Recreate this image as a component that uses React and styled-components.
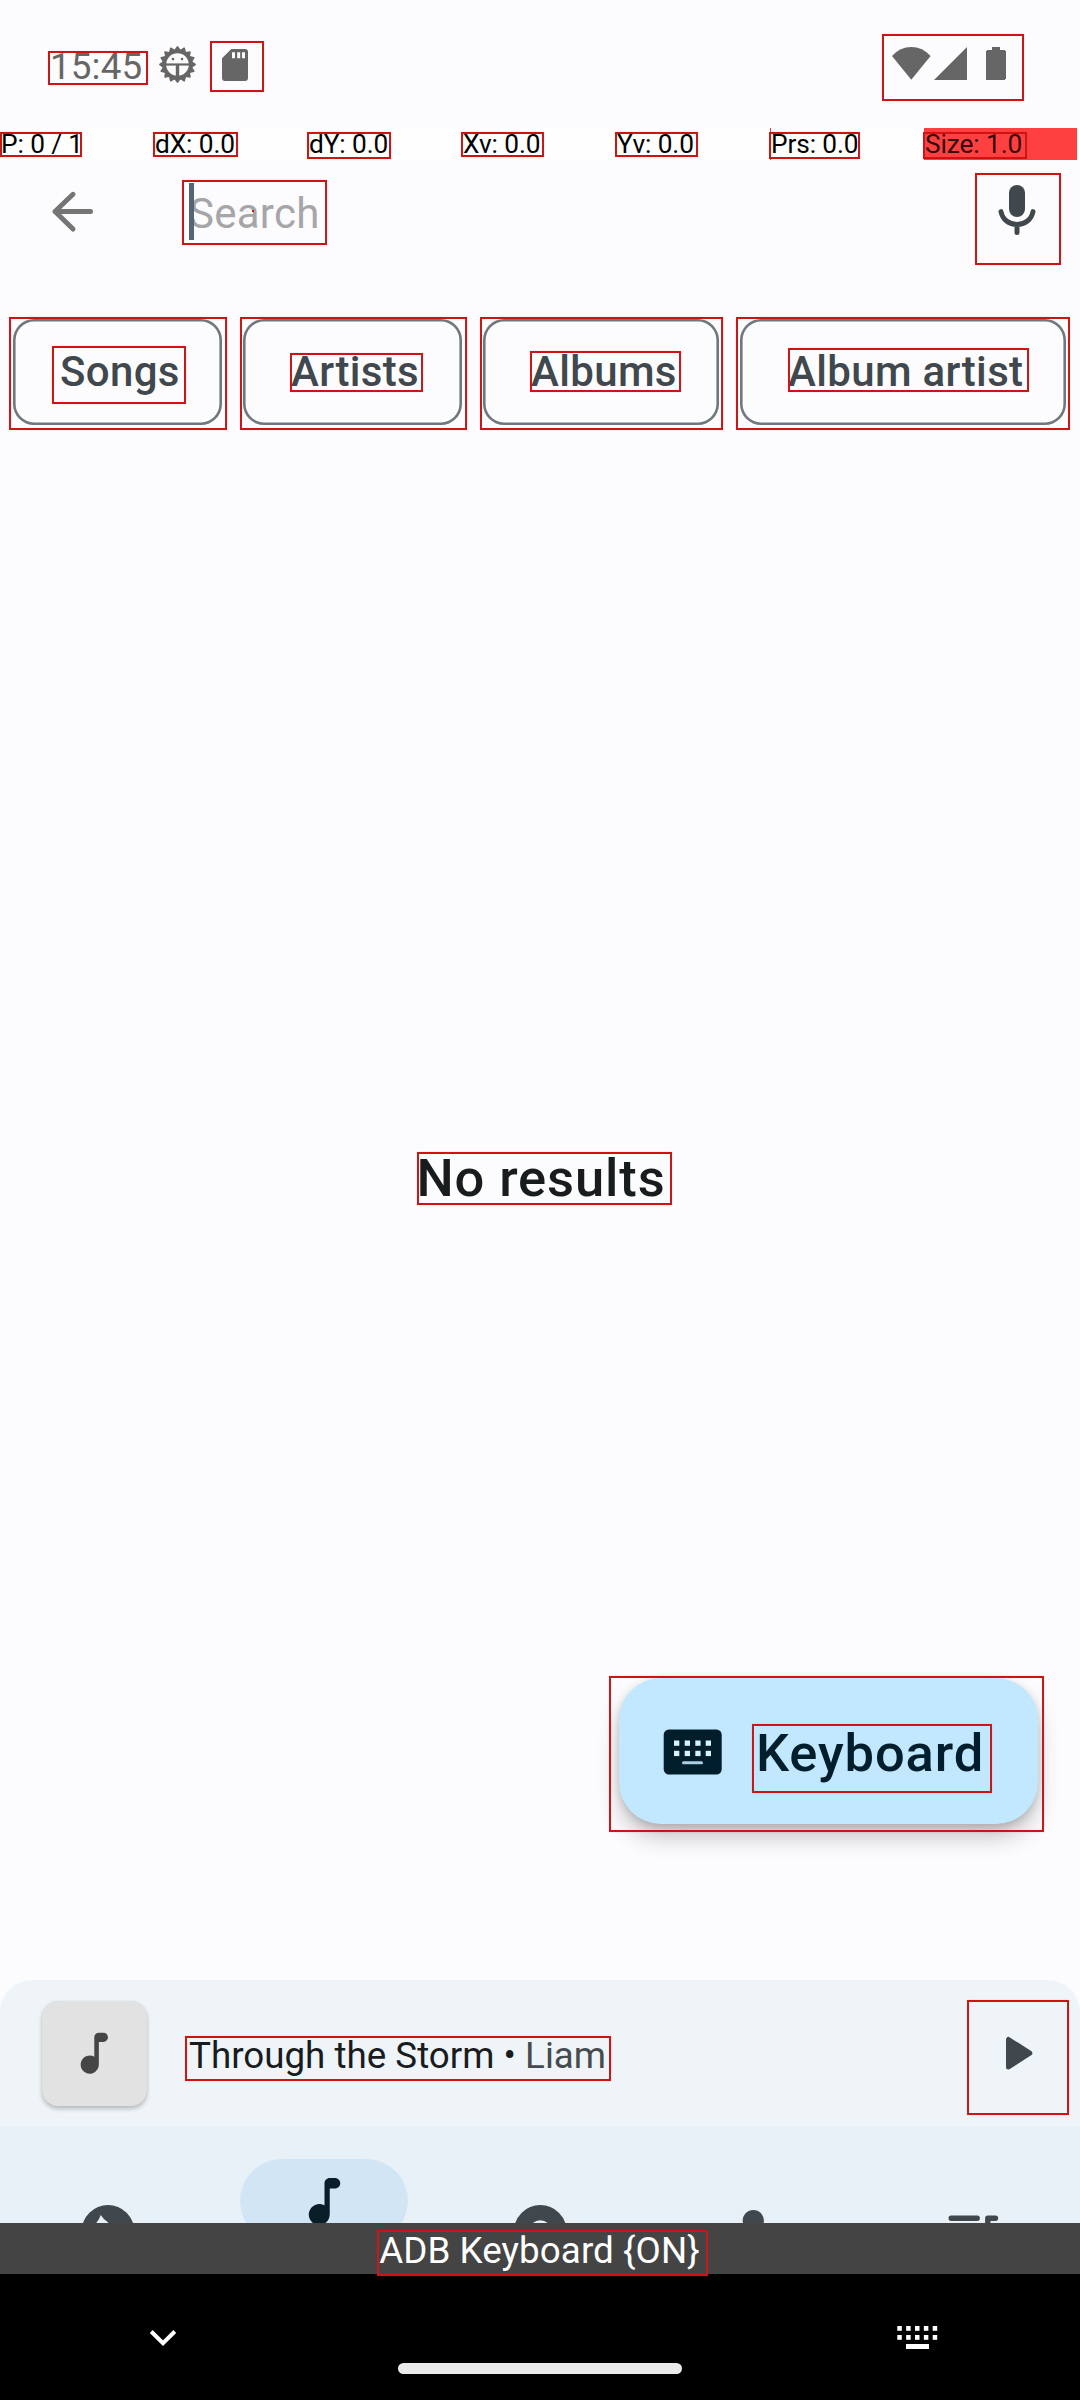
import React from "react";
import styled, { createGlobalStyle, css } from "styled-components";

const GlobalStyle = createGlobalStyle`
  *, *::before, *::after { box-sizing: border-box; }
  body { margin: 0; background: #fcfcff; font-family: Roboto, "Noto Sans", sans-serif; }
  svg { display: block; flex: none; }
`;

const Screen = styled.main`
  position: relative;
  display: flex;
  flex-direction: column;
  width: 1080px;
  height: 2400px;
  overflow: hidden;
  background: #fcfcff;
  white-space: nowrap;
`;

/* Status bar */
const StatusBar = styled.header`
  display: flex;
  align-items: flex-start;
  height: 128px;
  flex: none;
  padding: 45px 74px 0 50px;
  color: #666666;
`;

const Clock = styled.time`
  width: 108px;
  font-size: 36.75px;
  line-height: 43px;
  letter-spacing: 0.15px;
`;

const StatusIcons = styled.div`
  display: flex;
  gap: 24px;
`;

const SystemIcons = styled(StatusIcons)`
  margin-left: auto;
  gap: 3px;
`;

/* Touch pointer readout */
const PointerBar = styled.div`
  display: grid;
  grid-template-columns: repeat(7, 154px);
  height: 32px;
  flex: none;
  background: #fefefe;
`;

const PointerCell = styled.span`
  width: 153px;
  padding-left: 1px;
  font-size: 26.25px;
  line-height: 32px;
  letter-spacing: -0.1px;
  color: #000;
  ${({ $tick }) => $tick && css`box-shadow: inset 1px 0 #b85050;`}
  ${({ $hot }) => $hot && css`background: #ff4040; color: #330808;`}
`;

/* Search */
const SearchBar = styled.div`
  display: flex;
  align-items: center;
  height: 103px;
  flex: none;
  padding: 0 42px 0 41px;
`;

const SearchField = styled.div`
  position: relative;
  flex: 1;
  margin-left: 85px;
  padding-top: 4px;
  font-size: 42px;
  line-height: 60px;
  letter-spacing: 0.25px;
  color: #a6a6a8;
`;

const Cursor = styled.i`
  position: absolute;
  left: 0;
  top: 3px;
  width: 5px;
  height: 57px;
  background: #50616c;
  opacity: 0.97;
`;

const VoiceButton = styled.div`
  padding-bottom: 5px;
`;

/* Filter chips */
const ChipRow = styled.nav`
  display: flex;
  gap: 21px;
  flex: none;
  padding: 56px 14px 0 13px;
`;

const Chip = styled.button`
  width: ${({ $width }) => $width}px;
  height: 106px;
  padding: 0 0 0 ${({ $inset }) => $inset}px;
  border: 0;
  border-radius: 21px;
  box-shadow: inset 0 0 0 2.6px #70787d;
  background: transparent;
  font: 500 42px/106px Roboto, sans-serif;
  letter-spacing: 0.34px;
  text-align: left;
  color: #41484d;
`;

/* Results */
const Results = styled.section`
  display: flex;
  flex: 1;
  align-items: center;
  justify-content: center;
  padding: 0 0 49px 2px;
`;

const EmptyTitle = styled.h1`
  margin: 0;
  font-size: 52.5px;
  line-height: 64px;
  font-weight: 500;
  letter-spacing: 0.88px;
  color: #191c1e;
`;

const Fab = styled.button`
  position: absolute;
  right: 42px;
  bottom: 576px;
  display: flex;
  align-items: center;
  width: 419px;
  height: 146px;
  padding: 0 0 0 44px;
  border: 0;
  border-radius: 42px;
  background: #c2e8ff;
  box-shadow: 0 14px 24px -2px rgba(0, 0, 0, 0.24), 0 3px 9px rgba(0, 0, 0, 0.14);
  color: #001e2b;
`;

const FabIcon = styled.span`
  padding-top: 2px;
`;

const FabLabel = styled.span`
  margin-left: 34px;
  padding-top: 4px;
  font: 500 52.5px/64px Roboto, sans-serif;
  letter-spacing: 0.86px;
`;

/* Mini player */
const MiniPlayer = styled.section`
  display: flex;
  align-items: center;
  height: 147px;
  flex: none;
  padding: 0 36px 0 42px;
  border-radius: 32px 32px 0 0;
  background: #eff4f8;
`;

const Artwork = styled.div`
  display: grid;
  place-items: center;
  width: 105px;
  height: 105px;
  border-radius: 16px;
  background: #e2e2e2;
  box-shadow: 0 3px 4px rgba(0, 0, 0, 0.22), 0 0 2px rgba(0, 0, 0, 0.08);
  color: #454545;
`;

const Track = styled.p`
  flex: 1;
  margin: 0 0 0 42px;
  padding-top: 4px;
  font-size: 36.75px;
  line-height: 44px;
  color: #191c1e;
`;

const Artist = styled.span`
  color: #464b4f;
`;

/* Bottom navigation */
const BottomNav = styled.nav`
  display: grid;
  grid-template-columns: repeat(5, 1fr);
  height: 96px;
  flex: none;
  overflow: hidden;
  background: #e9f1f8;
`;

const NavItem = styled.div`
  display: flex;
  flex-direction: column;
  align-items: center;
  padding-top: ${({ $active }) => ($active ? 32 : 73)}px;
  color: #41484d;
`;

const Pill = styled.div`
  display: grid;
  place-items: center;
  width: 168px;
  height: 84px;
  flex: none;
  border-radius: 42px;
  background: #d2e5f4;
  color: #0a1e2a;
`;

/* Input method and system navigation */
const ImeBar = styled.div`
  height: 51px;
  flex: none;
  padding: 4px 1px 0 0;
  background: #444444;
  font-size: 36.75px;
  line-height: 47px;
  letter-spacing: 0.08px;
  text-align: center;
  color: #fff;
`;

const SystemNav = styled.footer`
  display: flex;
  align-items: flex-start;
  height: 126px;
  flex: none;
  padding: 52px 142px 0 149px;
  background: #000;
`;

const HomeHandle = styled.div`
  width: 284px;
  height: 11px;
  margin: 37px auto 0 221px;
  border-radius: 5.5px;
  background: #ebebeb;
`;

/* Element bounds drawn over the interface */
const Bounds = styled.i`
  position: absolute;
  left: ${({ $box }) => $box[0]}px;
  top: ${({ $box }) => $box[1]}px;
  width: ${({ $box }) => $box[2] - $box[0]}px;
  height: ${({ $box }) => $box[3] - $box[1]}px;
  border: 2px solid;
  border-color: #d01212 #c41a1c #d01212 #c41a1c;
  box-shadow: 0 0 2px rgba(220, 0, 0, 0.14);
  pointer-events: none;
`;

const TouchDot = styled.i`
  position: absolute;
  left: 252px;
  top: 210px;
  width: 2px;
  height: 2px;
  background: #d01212;
`;

const BugIcon = () => (
  <svg width="39" height="39" viewBox="-19.5 -19.5 39 39" fill="none" stroke="currentColor">
    <circle r="13.2" strokeWidth="3.8" />
    {Array.from({ length: 16 }, (_, i) => (
      <path key={i} d="M-2.4 -14.2L0 -17.6L2.4 -14.2Z" fill="currentColor" strokeWidth="1.6" strokeLinejoin="round" transform={`rotate(${i * 22.5})`} />
    ))}
    <path d="M-12 0H12" strokeWidth="2.2" />
    <path d="M0 0V12" strokeWidth="3.4" />
    <circle cx="-4.5" cy="-5.4" r="1.3" fill="currentColor" stroke="none" />
    <circle cx="4.5" cy="-5.4" r="1.3" fill="currentColor" stroke="none" />
  </svg>
);

const SdIcon = () => (
  <svg width="32" height="40" viewBox="0 0 32 40" fill="currentColor">
    <path fillRule="evenodd" d="M10.3 4H24q3 0 3 3V33q0 3-3 3H4q-3 0-3-3V13.3Z M11 7.2V13.2H14V7.2Z M16.2 7.2V13.2H19.2V7.2Z M21 7.2V13.2H24V7.2Z" />
  </svg>
);

const WifiIcon = () => (
  <svg width="39" height="36" viewBox="0 0 39 36" fill="currentColor">
    <path d="M0 11Q8 2 19.3 2T38.6 11L19.3 34.7Z" />
  </svg>
);

const SignalIcon = () => (
  <svg width="33" height="36" viewBox="0 0 33 36" fill="currentColor">
    <path d="M0 35L33 2V35Z" />
  </svg>
);

const BatteryIcon = () => (
  <svg width="36" height="36" viewBox="0 0 36 36" fill="currentColor">
    <path d="M30 2V5H35V6H36V34H35V35H16V6H17V5H22V2Z" />
  </svg>
);

const BackIcon = () => (
  <svg width="63" height="63" viewBox="0 0 63 63" fill="none" stroke="#757575" strokeWidth="5" strokeLinecap="round" strokeLinejoin="round">
    <path d="M49.5 31.5H14M32 14.3L14 31.5L32 49" />
  </svg>
);

const MicIcon = () => (
  <svg width="42" height="54" viewBox="0 0 42 54" fill="none" stroke="#41484d" strokeWidth="5" strokeLinecap="round">
    <rect x="13" y="3" width="16" height="32" rx="8" fill="#41484d" stroke="none" />
    <path d="M5 29.6C6.5 37.5 13 42.5 21 42.5S35.5 37.5 37 29.6M21 43V50.5" />
  </svg>
);

const KeyboardIcon = () => (
  <svg width="59" height="46" viewBox="0 0 59 46">
    <rect x="0.7" y="0.5" width="58" height="45" rx="5.2" fill="currentColor" />
    <g fill="#d9f0ff">
      {[11, 21.7, 32.3, 42.7].flatMap((x) => [11.5, 21.8].map((y) => <rect key={`${x}-${y}`} x={x} y={y} width="5.3" height="5.3" />))}
    </g>
    <rect x="19" y="32.3" width="21" height="3" rx="1.5" fill="#a9cfe5" />
  </svg>
);

const NoteIcon = ({ size }) => (
  <svg width={size} height={size} viewBox="0 0 24 24" fill="currentColor">
    <path d="M12 5v8.55c-.94-.54-2.1-.75-3.33-.32-1.34.48-2.37 1.67-2.61 3.07-.46 2.74 1.86 5.08 4.59 4.65 1.96-.31 3.35-2.11 3.35-4.1V7h2c1.1 0 2-.9 2-2s-.9-2-2-2h-2c-1.1 0-2 .9-2 2z" />
  </svg>
);

const PlayIcon = () => (
  <svg width="50" height="63" viewBox="0 0 50 63">
    <path d="M14.5 17.5V45L35.8 31.2Z" fill="#41484d" stroke="#41484d" strokeWidth="5" strokeLinejoin="round" />
  </svg>
);

const HomeIcon = () => (
  <svg width="63" height="63" viewBox="0 0 63 63" fill="currentColor">
    <circle cx="31" cy="31.3" r="26.3" />
    <path d="M23.7 15Q26.5 19.8 34 24.5L28 40L17.5 25Q22 20.5 23.7 15Z" fill="#e9f1f8" />
  </svg>
);

const DiscIcon = () => (
  <svg width="63" height="63" viewBox="0 0 63 63" fill="none" stroke="currentColor">
    <circle cx="31.3" cy="31.3" r="18.7" strokeWidth="15.2" />
    <circle cx="31.3" cy="31.3" r="3" fill="currentColor" />
  </svg>
);

const PersonIcon = () => (
  <svg width="63" height="63" viewBox="0 0 63 63" fill="currentColor">
    <circle cx="28.3" cy="20.5" r="10.6" />
    <path d="M7.5 52.5V46Q7.5 34.5 28.3 34.5Q36 34.5 40 36.5V52.5Z" />
  </svg>
);

const QueueIcon = () => (
  <svg width="63" height="63" viewBox="0 0 63 63" fill="none" stroke="currentColor" strokeWidth="5.4" strokeLinecap="round">
    <path d="M10.2 18.3H36.2M10.2 29H36.2M10.2 39.5H25" />
    <path d="M54.5 18.3H46.8V42" strokeLinejoin="round" />
    <circle cx="41.5" cy="42" r="5.3" />
  </svg>
);

const ChevronIcon = () => (
  <svg width="28" height="26" viewBox="0 0 28 26" fill="none" stroke="#fff" strokeWidth="4">
    <path d="M2.2 5.5L14 17.2L25.8 5.5" />
  </svg>
);

const KeysIcon = () => (
  <svg width="41" height="26" viewBox="0 0 41 26" fill="#fff">
    {[0, 1, 2, 3, 4].flatMap((i) => [0, 1].map((j) => <rect key={`${i}-${j}`} x={0.3 + i * 8.85} y={j * 9} width="4.5" height="4.8" />))}
    <rect x="9" y="18" width="23" height="5" />
  </svg>
);

const POINTER_CELLS = [
  { text: "P: 0 / 1" },
  { text: "dX: 0.0" },
  { text: "dY: 0.0" },
  { text: "Xv: 0.0" },
  { text: "Yv: 0.0" },
  { text: "Prs: 0.0", tick: true },
  { text: "Size: 1.0", hot: true },
];

const CHIPS = [
  { label: "Songs", width: 209, inset: 47 },
  { label: "Artists", width: 219, inset: 48 },
  { label: "Albums", width: 236, inset: 48 },
  { label: "Album artist", width: 326, inset: 48 },
];

const BOUNDS = [
  [48, 51, 148, 85], [210, 41, 264, 92], [882, 34, 1024, 101],
  [0, 132, 82, 157], [153, 132, 238, 157], [307, 132, 391, 159], [461, 132, 544, 157],
  [615, 132, 698, 157], [769, 132, 860, 159], [923, 132, 1027, 159],
  [182, 180, 327, 245], [975, 173, 1061, 265],
  [9, 317, 227, 430], [240, 317, 467, 430], [480, 317, 723, 430], [736, 317, 1070, 430],
  [52, 346, 186, 404], [290, 353, 423, 392], [530, 351, 681, 392], [788, 348, 1029, 392],
  [417, 1152, 672, 1205], [609, 1676, 1044, 1832], [752, 1724, 992, 1793],
  [185, 2036, 611, 2081], [967, 2000, 1069, 2115], [377, 2230, 708, 2276],
];

export default function App() {
  return (
    <Screen>
      <GlobalStyle />
      <StatusBar>
        <Clock>15:45</Clock>
        <StatusIcons>
          <BugIcon />
          <SdIcon />
        </StatusIcons>
        <SystemIcons>
          <WifiIcon />
          <SignalIcon />
          <BatteryIcon />
        </SystemIcons>
      </StatusBar>
      <PointerBar>
        {POINTER_CELLS.map(({ text, tick, hot }) => (
          <PointerCell key={text} $tick={tick} $hot={hot}>{text}</PointerCell>
        ))}
      </PointerBar>
      <SearchBar>
        <BackIcon />
        <SearchField>
          Search
          <Cursor />
        </SearchField>
        <VoiceButton><MicIcon /></VoiceButton>
      </SearchBar>
      <ChipRow>
        {CHIPS.map(({ label, width, inset }) => (
          <Chip key={label} $width={width} $inset={inset}>{label}</Chip>
        ))}
      </ChipRow>
      <Results>
        <EmptyTitle>No results</EmptyTitle>
      </Results>
      <MiniPlayer>
        <Artwork><NoteIcon size={54.6} /></Artwork>
        <Track>Through the Storm • <Artist>Liam</Artist></Track>
        <PlayIcon />
      </MiniPlayer>
      <BottomNav>
        <NavItem><HomeIcon /></NavItem>
        <NavItem $active><Pill><NoteIcon size={63} /></Pill></NavItem>
        <NavItem><DiscIcon /></NavItem>
        <NavItem><PersonIcon /></NavItem>
        <NavItem><QueueIcon /></NavItem>
      </BottomNav>
      <ImeBar>ADB Keyboard {"{ON}"}</ImeBar>
      <SystemNav>
        <ChevronIcon />
        <HomeHandle />
        <KeysIcon />
      </SystemNav>
      <Fab>
        <FabIcon><KeyboardIcon /></FabIcon>
        <FabLabel>Keyboard</FabLabel>
      </Fab>
      {BOUNDS.map((box) => <Bounds key={box.join()} $box={box} />)}
      <TouchDot />
    </Screen>
  );
}
